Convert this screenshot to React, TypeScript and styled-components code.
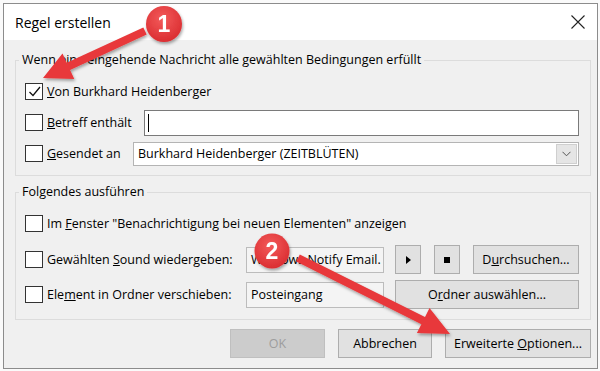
import React from "react";
import styled, { createGlobalStyle } from "styled-components";

const GlobalStyle = createGlobalStyle`
  html, body {
    margin: 0;
    padding: 0;
    background: #fafafa;
  }
  body {
    font-family: "Open Sans", "Noto Sans", sans-serif;
    font-size: 12.5px;
    color: #000;
  }
`;

const Stage = styled.div`
  position: relative;
  width: 600px;
  height: 371px;
  padding: 3px 0 0 3px;
  box-sizing: border-box;
  overflow: hidden;
`;

const Dialog = styled.div`
  width: 595px;
  height: 366px;
  box-sizing: border-box;
  border: 1px solid #8c8c8c;
  background: #f0f0f0;
  display: flex;
  flex-direction: column;
`;

const TitleBar = styled.div`
  height: 36px;
  flex-shrink: 0;
  background: #fff;
  display: flex;
  align-items: center;
  justify-content: space-between;
  padding: 0 12px 0 11px;
  font-size: 14px;
`;

const Body = styled.div`
  flex: 1;
  display: flex;
  flex-direction: column;
  padding: 12px 6px 0 11px;
`;

const Group = styled.fieldset<{ $gap?: number; $pb: number }>`
  margin: 0 0 ${(p) => p.$gap ?? 0}px 0;
  border: 1px solid #dcdcdc;
  padding: 10px 11px ${(p) => p.$pb}px 9px;
  display: flex;
  flex-direction: column;
  min-width: 0;
`;

const Legend = styled.legend`
  padding: 0 3px;
  margin-left: -6px;
  line-height: 16px;
`;

const Row = styled.div<{ $h: number; $mt?: number }>`
  display: flex;
  align-items: center;
  height: ${(p) => p.$h}px;
  margin-top: ${(p) => p.$mt ?? 0}px;
`;

const LabelCell = styled.div<{ $w?: number }>`
  display: flex;
  align-items: center;
  width: ${(p) => (p.$w ? `${p.$w}px` : "auto")};
  flex-shrink: 0;
`;

const Box = styled.span`
  width: 16px;
  height: 15px;
  border: 1px solid #333;
  background: #fff;
  flex-shrink: 0;
  display: flex;
  align-items: center;
  justify-content: center;
`;

const Label = styled.span`
  margin-left: 4px;
  white-space: nowrap;
`;

const TextField = styled.div<{ $w: number }>`
  margin-left: auto;
  width: ${(p) => p.$w}px;
  height: 26px;
  box-sizing: border-box;
  border: 1px solid #7a7a7a;
  background: #fff;
  display: flex;
  align-items: center;
  padding-left: 3px;
`;

const Caret = styled.span`
  width: 1px;
  height: 18px;
  background: #000;
`;

const Combo = styled.div<{ $w: number }>`
  margin-left: auto;
  width: ${(p) => p.$w}px;
  height: 24px;
  box-sizing: border-box;
  border: 1px solid #b4b4b4;
  background: #fff;
  display: flex;
  align-items: center;
  padding: 0 1px 0 4px;
`;

const ComboText = styled.span`
  flex: 1;
  white-space: nowrap;
`;

const DropButton = styled.span`
  width: 21px;
  height: 20px;
  box-sizing: border-box;
  border: 1px solid #cfcfcf;
  background: #e5e5e5;
  display: flex;
  align-items: center;
  justify-content: center;
`;

const ReadField = styled.div`
  width: 138px;
  height: 26px;
  box-sizing: border-box;
  border: 1px solid #bcbcbc;
  background: #f4f4f4;
  display: flex;
  align-items: center;
  padding-left: 4px;
  overflow: hidden;
  white-space: nowrap;
  flex-shrink: 0;
`;

const Button = styled.button<{ $w: number; $ml?: number; $disabled?: boolean }>`
  width: ${(p) => p.$w}px;
  height: 29px;
  margin-left: ${(p) => p.$ml ?? 0}px;
  box-sizing: border-box;
  border: 1px solid ${(p) => (p.$disabled ? "#bfbfbf" : "#adadad")};
  background: ${(p) => (p.$disabled ? "#cccccc" : "#e1e1e1")};
  color: ${(p) => (p.$disabled ? "#9d9d9d" : "#000")};
  font-family: inherit;
  font-size: 12.5px;
  padding: 0;
  display: flex;
  align-items: center;
  justify-content: center;
  flex-shrink: 0;
  white-space: nowrap;
`;

const Footer = styled.div`
  display: flex;
  justify-content: flex-end;
  gap: 13px;
  margin-top: 9px;
`;

const Overlay = styled.svg`
  position: absolute;
  left: 0;
  top: 0;
  pointer-events: none;
`;

const Check = () => (
  <svg width="13" height="13" viewBox="0 0 13 13">
    <path d="M1.5 7 L5 10.5 L12 2" fill="none" stroke="#111" strokeWidth="1.3" />
  </svg>
);

const CheckBox = ({ checked }: { checked?: boolean }) => <Box>{checked && <Check />}</Box>;

const Badge = ({ cx, cy, r, n }: { cx: number; cy: number; r: number; n: string }) => (
  <g filter="url(#shadow)">
    <circle cx={cx} cy={cy} r={r} fill="url(#badge)" />
    <text
      x={cx}
      y={cy + 8}
      textAnchor="middle"
      fill="#fff"
      fontSize="23"
      fontWeight="bold"
      fontFamily="'Liberation Sans', Arial, sans-serif"
    >
      {n}
    </text>
  </g>
);

const Annotations = () => (
  <Overlay width="600" height="371" viewBox="0 0 600 371">
    <defs>
      <filter id="shadow" x="-30%" y="-30%" width="160%" height="160%">
        <feDropShadow dx="1" dy="2" stdDeviation="1.5" floodColor="#000" floodOpacity="0.35" />
      </filter>
      <radialGradient id="badge" cx="45%" cy="35%" r="70%">
        <stop offset="0%" stopColor="#f35b5b" />
        <stop offset="100%" stopColor="#d92a2e" />
      </radialGradient>
    </defs>
    <g filter="url(#shadow)" fill="#e8383a">
      <polygon points="143.3,27.4 66.7,62.7 62.5,53.6 43,78 74.3,79 70.1,69.9 146.7,34.6" />
      <polygon points="296.2,261.6 421.4,324.2 416.9,333.1 450,334 429.5,308.1 425,317 299.8,254.4" />
    </g>
    <Badge cx={164} cy={24} r={18} n="1" />
    <Badge cx={272} cy={251} r={17.5} n="2" />
  </Overlay>
);

export default function App() {
  return (
    <>
      <GlobalStyle />
      <Stage>
        <Dialog>
          <TitleBar>
            <span>Regel erstellen</span>
            <svg width="14" height="14" viewBox="0 0 14 14">
              <path d="M0.5 0.5 L13.5 13.5 M13.5 0.5 L0.5 13.5" stroke="#222" strokeWidth="1.1" />
            </svg>
          </TitleBar>
          <Body>
            <Group $gap={8} $pb={8}>
              <Legend>Wenn eine eingehende Nachricht alle gewählten Bedingungen erfüllt</Legend>
              <Row $h={27}>
                <CheckBox checked />
                <Label>
                  <u>V</u>on Burkhard Heidenberger
                </Label>
              </Row>
              <Row $h={27} $mt={4}>
                <CheckBox />
                <Label>
                  <u>B</u>etreff enthält
                </Label>
                <TextField $w={435}>
                  <Caret />
                </TextField>
              </Row>
              <Row $h={27} $mt={4}>
                <CheckBox />
                <Label>
                  <u>G</u>esendet an
                </Label>
                <Combo $w={446}>
                  <ComboText>Burkhard Heidenberger (ZEITBLÜTEN)</ComboText>
                  <DropButton>
                    <svg width="9" height="6" viewBox="0 0 9 6">
                      <path d="M0.5 0.8 L4.5 4.8 L8.5 0.8" fill="none" stroke="#555" strokeWidth="1" />
                    </svg>
                  </DropButton>
                </Combo>
              </Row>
            </Group>
            <Group $pb={10}>
              <Legend>Folgendes ausführen</Legend>
              <Row $h={26}>
                <CheckBox />
                <Label>
                  Im <u>F</u>enster "Benachrichtigung bei neuen Elementen" anzeigen
                </Label>
              </Row>
              <Row $h={29} $mt={9}>
                <LabelCell $w={221}>
                  <CheckBox />
                  <Label>
                    Gewählten <u>S</u>ound wiedergeben:
                  </Label>
                </LabelCell>
                <ReadField>Windows Notify Email.</ReadField>
                <Button $w={26} $ml={11}>
                  <svg width="5" height="8" viewBox="0 0 5 8">
                    <path d="M0 0 L5 4 L0 8 Z" fill="#000" />
                  </svg>
                </Button>
                <Button $w={26} $ml={13}>
                  <svg width="6" height="6" viewBox="0 0 6 6">
                    <rect width="6" height="6" fill="#000" />
                  </svg>
                </Button>
                <Button $w={106} $ml={13}>
                  <span>
                    D<u>u</u>rchsuchen...
                  </span>
                </Button>
              </Row>
              <Row $h={29} $mt={6}>
                <LabelCell $w={221}>
                  <CheckBox />
                  <Label>
                    Ele<u>m</u>ent in Ordner verschieben:
                  </Label>
                </LabelCell>
                <ReadField>Posteingang</ReadField>
                <Button $w={184} $ml={11}>
                  <span>
                    O<u>r</u>dner auswählen...
                  </span>
                </Button>
              </Row>
            </Group>
            <Footer>
              <Button $w={95} $disabled>
                OK
              </Button>
              <Button $w={94}>Abbrechen</Button>
              <Button $w={146}>
                <span>
                  Erweiterte <u>O</u>ptionen...
                </span>
              </Button>
            </Footer>
          </Body>
        </Dialog>
        <Annotations />
      </Stage>
    </>
  );
}
